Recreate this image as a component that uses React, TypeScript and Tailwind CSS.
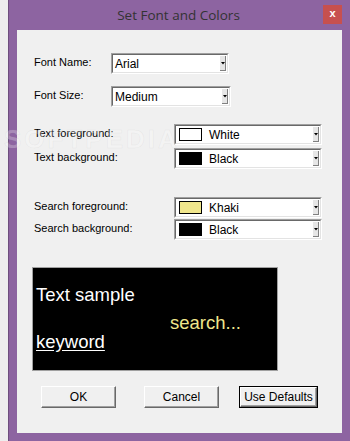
import React from 'react'

const ui = { fontFamily: '"Liberation Sans", Arial, sans-serif' }

// ─── Combo box (classic sunken look) ────────────────────────────────────────────
function Combo({ width, children }: { width: number; children: React.ReactNode }) {
  return (
    <div
      className="h-[21px] flex border-t border-l border-[#a0a0a0] border-b border-r border-b-white border-r-white"
      style={{ width }}
    >
      <div className="flex-1 flex border-t border-l border-[#696969] border-b border-r border-b-[#e3e3e3] border-r-[#e3e3e3] bg-white">
        <div className="flex-1 flex items-center pl-[2px] text-[12px] text-black leading-none">{children}</div>
        <div className="w-[6px] my-[1px] mr-[1px] bg-[#e6e6e6] border-r border-b border-[#808080] flex items-center justify-center">
          <svg width="4" height="4" viewBox="0 0 4 4">
            <path d="M0 1h4L2 3.5z" fill="#000" />
          </svg>
        </div>
      </div>
    </div>
  )
}

function ColorCombo({ color, name }: { color: string; name: string }) {
  return (
    <Combo width={148}>
      <div className="w-[23px] h-[13px] border border-black ml-[1px]" style={{ background: color }} />
      <span className="ml-[7px]">{name}</span>
    </Combo>
  )
}

function Row({ label, labelW, top, children }: { label: string; labelW: number; top: number; children: React.ReactNode }) {
  return (
    <div className="flex items-start" style={{ marginTop: top }}>
      <div className="text-[11px] text-[#000] pt-[1px]" style={{ width: labelW }}>{label}</div>
      {children}
    </div>
  )
}

function Button({ label, isDefault }: { label: string; isDefault?: boolean }) {
  const w = isDefault ? 'w-[79px]' : 'w-[75px]'
  return (
    <div className={`${w} h-[22px] ${isDefault ? 'border border-black' : ''} flex`}>
      <div className="flex-1 flex items-center justify-center bg-[#f0f0f0] border-t border-l border-white border-b border-r border-b-[#696969] border-r-[#696969] text-[12px] text-black shadow-[inset_-1px_-1px_0_#a0a0a0]">
        {label}
      </div>
    </div>
  )
}

export default function App() {
  return (
    <div className="relative w-[350px] h-[441px] bg-[#eeeeee] overflow-hidden" style={ui}>
      <div className="ml-[8px] w-[342px] h-[441px] bg-[#8d64a1] border-l border-[#6e4f7e]">
        {/* Title bar */}
        <div className="h-[30px] relative flex items-center justify-center">
          <span className="text-[13.5px] text-[#333333] mt-[1px] -ml-[2px]" style={{ fontFamily: '"Open Sans", "Noto Sans", sans-serif' }}>
            Set Font and Colors
          </span>
          <div className="absolute right-[8px] top-[5px] w-[19px] h-[19px] bg-[#c7504f] flex items-center justify-center">
            <span className="text-white text-[11px] font-bold leading-none mb-[2px]">x</span>
          </div>
        </div>

        {/* Client area */}
        <div className="ml-[8px] w-[325px] h-[403px] bg-[#f0f0f0] pl-[17px]">
          <div className="pt-[23px]">
            <Row label="Font Name:" labelW={77} top={0}>
              <Combo width={118}>Arial</Combo>
            </Row>
            <Row label="Font Size:" labelW={77} top={12}>
              <Combo width={120}>Medium</Combo>
            </Row>
            <Row label="Text foreground:" labelW={140} top={17}>
              <ColorCombo color="#ffffff" name="White" />
            </Row>
            <Row label="Text background:" labelW={140} top={3}>
              <ColorCombo color="#000000" name="Black" />
            </Row>
            <Row label="Search foreground:" labelW={140} top={28}>
              <ColorCombo color="#f0e68c" name="Khaki" />
            </Row>
            <Row label="Search background:" labelW={140} top={1}>
              <ColorCombo color="#000000" name="Black" />
            </Row>
          </div>

          {/* Preview */}
          <div className="mt-[27px] -ml-[2px] w-[246px] h-[104px] bg-black border border-[#a0a0a0] pl-[3px] pt-[17px] text-[18.5px] leading-[20px]">
            <div className="text-white">Text sample</div>
            <div className="text-[#f0e68c] mt-[8px] ml-[134px]">search...</div>
            <div className="text-white underline underline-offset-2 -mt-[1px]">keyword</div>
          </div>

          {/* Buttons */}
          <div className="flex mt-[15px] ml-[7px]">
            <Button label="OK" />
            <div className="w-[28px]" />
            <Button label="Cancel" />
            <div className="w-[20px]" />
            <Button label="Use Defaults" isDefault />
          </div>
        </div>
      </div>

      {/* watermark */}
      <div
        className="absolute left-[4px] top-[120px] text-[26px] font-bold tracking-[3px] text-white/25 pointer-events-none"
        style={{ WebkitTextStroke: '0.5px rgba(170,170,170,0.18)' }}
      >
        SOFTPEDIA
      </div>
    </div>
  )
}
